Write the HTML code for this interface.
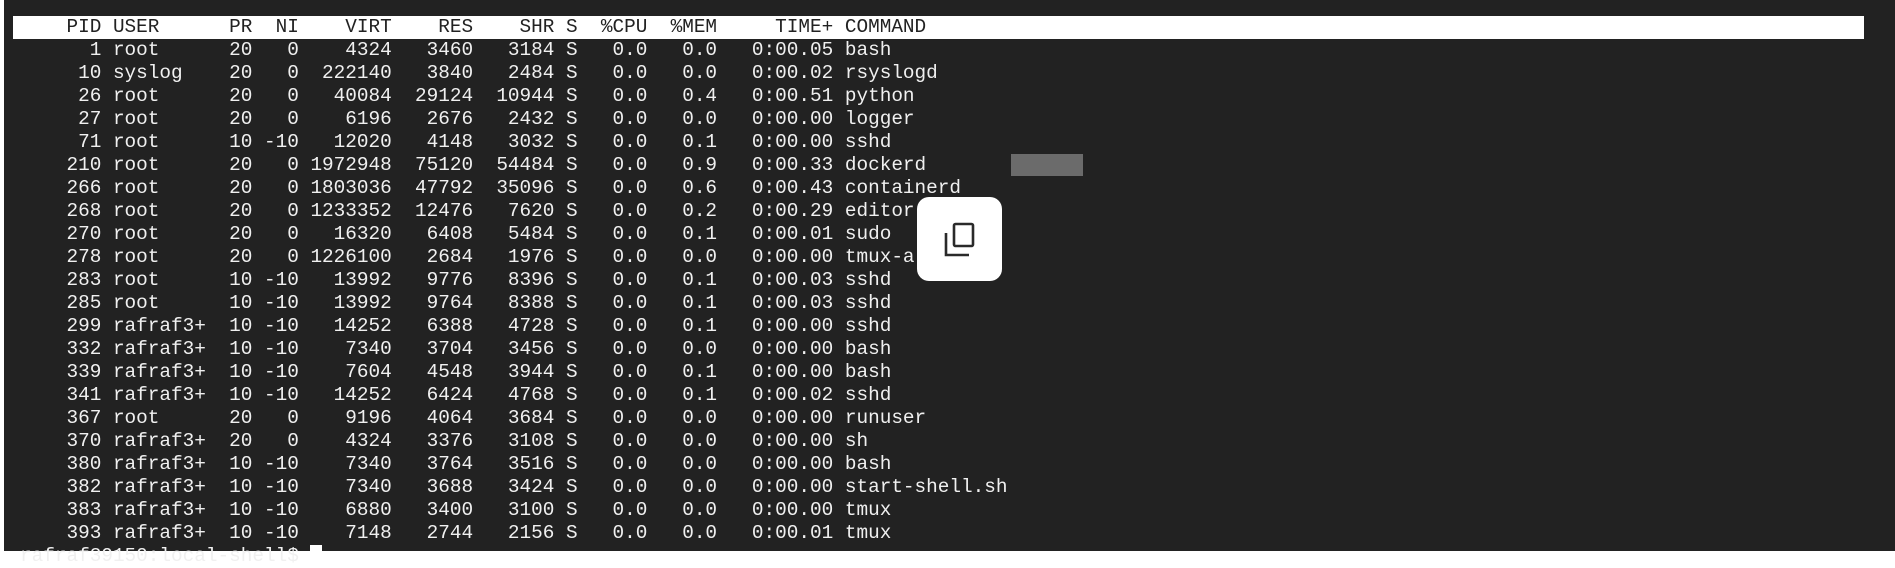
<!DOCTYPE html>
<html><head><meta charset="utf-8"><style>
html,body{margin:0;padding:0;}
body{width:1895px;height:551px;overflow:hidden;background:#fff;position:relative;font-family:"Liberation Mono",monospace;}
#term{position:absolute;left:4px;top:0;width:1891px;height:551px;background:#222;}
#hdr{position:absolute;left:13px;top:16px;width:1851px;height:23px;background:#fff;}
pre{position:absolute;left:20px;top:16px;margin:0;font-size:19.37px;line-height:23px;color:#f0f0f0;font-family:"Liberation Mono",monospace;white-space:pre;}
pre .h{color:#222;}
#gray{position:absolute;left:1011px;top:154px;width:72px;height:22px;background:#6b6b6b;}
#btn{position:absolute;left:917px;top:197px;width:85px;height:84px;background:#fff;border-radius:12px;}
.cur{background:#fff;color:#222;}
</style></head><body>
<div id="term"></div>
<div id="hdr"></div>
<pre><span class="h">    PID USER      PR  NI    VIRT    RES    SHR S  %CPU  %MEM     TIME+ COMMAND</span>
      1 root      20   0    4324   3460   3184 S   0.0   0.0   0:00.05 bash
     10 syslog    20   0  222140   3840   2484 S   0.0   0.0   0:00.02 rsyslogd
     26 root      20   0   40084  29124  10944 S   0.0   0.4   0:00.51 python
     27 root      20   0    6196   2676   2432 S   0.0   0.0   0:00.00 logger
     71 root      10 -10   12020   4148   3032 S   0.0   0.1   0:00.00 sshd
    210 root      20   0 1972948  75120  54484 S   0.0   0.9   0:00.33 dockerd
    266 root      20   0 1803036  47792  35096 S   0.0   0.6   0:00.43 containerd
    268 root      20   0 1233352  12476   7620 S   0.0   0.2   0:00.29 editor
    270 root      20   0   16320   6408   5484 S   0.0   0.1   0:00.01 sudo
    278 root      20   0 1226100   2684   1976 S   0.0   0.0   0:00.00 tmux-a
    283 root      10 -10   13992   9776   8396 S   0.0   0.1   0:00.03 sshd
    285 root      10 -10   13992   9764   8388 S   0.0   0.1   0:00.03 sshd
    299 rafraf3+  10 -10   14252   6388   4728 S   0.0   0.1   0:00.00 sshd
    332 rafraf3+  10 -10    7340   3704   3456 S   0.0   0.0   0:00.00 bash
    339 rafraf3+  10 -10    7604   4548   3944 S   0.0   0.1   0:00.00 bash
    341 rafraf3+  10 -10   14252   6424   4768 S   0.0   0.1   0:00.02 sshd
    367 root      20   0    9196   4064   3684 S   0.0   0.0   0:00.00 runuser
    370 rafraf3+  20   0    4324   3376   3108 S   0.0   0.0   0:00.00 sh
    380 rafraf3+  10 -10    7340   3764   3516 S   0.0   0.0   0:00.00 bash
    382 rafraf3+  10 -10    7340   3688   3424 S   0.0   0.0   0:00.00 start-shell.sh
    383 rafraf3+  10 -10    6880   3400   3100 S   0.0   0.0   0:00.00 tmux
    393 rafraf3+  10 -10    7148   2744   2156 S   0.0   0.0   0:00.01 tmux
rafraf39150:local-shell$ <span class="cur"> </span></pre>
<div id="gray"></div>
<div id="btn"><svg width="85" height="84" viewBox="0 0 85 84" style="position:absolute;left:0;top:0">
<rect x="37" y="27" width="19" height="22" rx="1.5" fill="none" stroke="#2a2a2a" stroke-width="2.6"/>
<path d="M29 36 V58 H52" fill="none" stroke="#2a2a2a" stroke-width="2.6"/>
</svg></div>
</body></html>
